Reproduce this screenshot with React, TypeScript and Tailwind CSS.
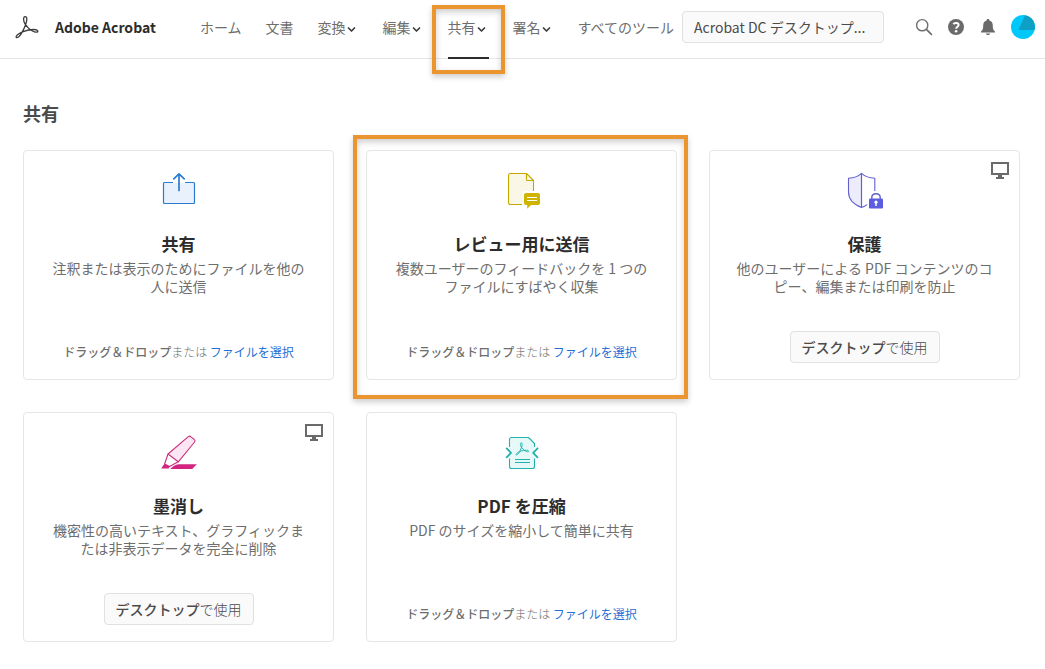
import { useState, type ReactNode } from 'react'
import clsx from 'clsx'

const ACROBAT_PATH =
  'M1.2 21.5C3 17.5 12 14.6 19 14.5C23.2 14.5 24 17.2 21.2 17.2C16.5 17 9 10 8.6 4.6C8.4 .8 11.9 .6 11.8 4.2C11.6 9.5 6.6 19.5 3.5 22C2 23 .8 22.6 1.2 21.5Z'

function AcrobatLogo() {
  return (
    <svg className="w-6 h-6" viewBox="0 0 24 24" fill="none" stroke="#3c3c3c" strokeWidth="1.3" aria-hidden="true">
      <path d={ACROBAT_PATH} />
    </svg>
  )
}

function ChevronDown() {
  return (
    <svg className="w-[9px] h-[9px] mt-1" viewBox="0 0 9 9" fill="none" stroke="#3c3c3c" strokeWidth="1.7" strokeLinecap="round" strokeLinejoin="round" aria-hidden="true">
      <path d="M1.5 3L4.5 6L7.5 3" />
    </svg>
  )
}

function SearchIcon() {
  return (
    <svg className="w-[18px] h-[18px]" viewBox="0 0 18 18" fill="none" stroke="#6e6e6e" strokeWidth="1.4" strokeLinecap="round">
      <circle cx="7.2" cy="7.2" r="5.6" />
      <path d="M11.4 11.4L16.4 16.4" strokeWidth="1.7" />
    </svg>
  )
}

function HelpIcon() {
  return (
    <svg className="w-[18px] h-[18px]" viewBox="0 0 18 18" fill="none">
      <circle cx="9" cy="9" r="8" fill="#6a6a6a" />
      <path d="M6.4 6.2C7.2 4.6 11.6 4.3 11.6 6.9C11.6 8.7 9.1 8.7 9.1 10.8" stroke="#fff" strokeWidth="2" />
      <circle cx="9.1" cy="13.2" r="1.3" fill="#fff" />
    </svg>
  )
}

function BellIcon() {
  return (
    <svg className="w-[18px] h-[18px]" viewBox="0 0 18 18" fill="#6a6a6a">
      <path d="M9 .9C9.9 .9 10.4 1.4 10.4 2.4C12.8 3 13.8 5 13.8 7.2C13.8 11 14.4 12 16 13.4V14.4H2V13.4C3.6 12 4.2 11 4.2 7.2C4.2 5 5.2 3 7.6 2.4C7.6 1.4 8.1 .9 9 .9Z" />
      <path d="M6.9 15.4H11.1C10.8 17.6 7.2 17.6 6.9 15.4Z" />
    </svg>
  )
}

function Avatar() {
  return (
    <svg className="w-6 h-6" viewBox="0 0 24 24">
      <circle cx="12" cy="12" r="12" fill="#00c8fa" />
      <path d="M14 .2A12 12 0 0 1 23.6 15H7.5Z" fill="#0d9fc4" />
    </svg>
  )
}

function DesktopIcon() {
  return (
    <svg className="w-[18px] h-[18px]" viewBox="0 0 18 18" fill="#6a6a6a" aria-hidden="true">
      <path fillRule="evenodd" d="M0 1H18V14H0ZM2 3V12H16V3Z" />
      <path d="M7 14H11V16H13V18H5V16H7Z" />
    </svg>
  )
}

function ShareIcon() {
  return (
    <svg className="w-10 h-10" viewBox="0 0 40 40" fill="none" stroke="#2b7bd0" strokeWidth="1.2" strokeLinecap="round" strokeLinejoin="round">
      <rect x="5" y="13" width="30" height="20" fill="#e9f1fd" stroke="none" />
      <path d="M13.5 12.5H5.5Q4.5 12.5 4.5 13.5V32.5Q4.5 33.5 5.5 33.5H34.5Q35.5 33.5 35.5 32.5V13.5Q35.5 12.5 34.5 12.5H26.5" />
      <path d="M20 20.5V4M14.8 8.8L20 3.8L25.2 8.8" strokeWidth="1.7" />
    </svg>
  )
}

function ReviewIcon() {
  return (
    <svg className="w-10 h-10" viewBox="0 0 40 40" fill="none" stroke="#c3a900" strokeWidth="1.1" strokeLinejoin="round">
      <path d="M8.5 3.5H24.5L31.5 10.5V21H20.5V34.5H8.5Q6.5 34.5 6.5 32.5V5.5Q6.5 3.5 8.5 3.5Z" fill="#faf7e6" stroke="none" />
      <path d="M20 34.5H8.5Q6.5 34.5 6.5 32.5V5.5Q6.5 3.5 8.5 3.5H24.5L31.5 10.5V21M24.5 3.5V9.5Q24.5 10.5 25.5 10.5H31.5" />
      <path d="M24 23H36Q38 23 38 25V33Q38 35 36 35H29L25.2 38.8V35H24Q22 35 22 33V25Q22 23 24 23Z" fill="#cfb300" stroke="none" />
      <path d="M25 27.5H35M25 30.5H35" stroke="#fff" />
    </svg>
  )
}

function ProtectIcon() {
  return (
    <svg className="w-10 h-10" viewBox="0 0 40 40" fill="none" stroke="#6360d0" strokeWidth="1.1" strokeLinejoin="round">
      <path d="M16.5 3.3C13 6.5 8 8 3.5 8.2V22C3.5 30 10 35 16.5 37.6Z" fill="#ececfb" />
      <path d="M16.5 3.3C20 6.5 25 8 29.8 8.2V21M16.5 37.6C18.6 36.8 20.5 35.8 22.2 34.6M16.5 3.3V37.6" />
      <path d="M26.8 29V27.5Q26.8 23.7 31 23.7Q35.2 23.7 35.2 27.5V29" strokeWidth="1.4" />
      <rect x="24" y="28.5" width="14" height="10" rx="1.2" fill="#5c5ce0" stroke="none" />
      <circle cx="31" cy="32.2" r="1.6" fill="#fff" stroke="none" />
      <path d="M31 32.5V36" stroke="#fff" strokeWidth="1.4" />
    </svg>
  )
}

function RedactIcon() {
  return (
    <svg className="w-10 h-10" viewBox="0 0 40 40" fill="none" stroke="#c9307c" strokeWidth="1.1" strokeLinejoin="round">
      <path d="M29.3 4.6Q30.8 3.6 32 4.8L35.4 7.6Q36.6 8.8 35.6 10L19.3 29.8L9 22Z" fill="#fde6f4" />
      <path d="M9 22L5.6 32L10.6 34.4L19.3 29.8" />
      <path d="M5.2 32L10.8 34.4L9.6 36.6H2.2Z" fill="#d3247f" stroke="none" />
      <path d="M11.2 37Q15.5 32.3 20.5 32.3H37.8L33.2 37Z" fill="#d3247f" stroke="none" />
    </svg>
  )
}

function CompressIcon() {
  return (
    <svg className="w-10 h-10" viewBox="0 0 40 40" fill="none" stroke="#22b2ac" strokeWidth="1.1" strokeLinejoin="round">
      <path d="M9.5 5.5H26.5L32.5 11.5V34.5Q32.5 36.5 30.5 36.5H9.5Q7.5 36.5 7.5 34.5V7.5Q7.5 5.5 9.5 5.5Z" fill="#e6f9f8" stroke="none" />
      <path d="M7.5 15V7.5Q7.5 5.5 9.5 5.5H26.5L32.5 11.5V15M7.5 26.5V34.5Q7.5 36.5 9.5 36.5H30.5Q32.5 36.5 32.5 34.5V26.5" />
      <path d="M4.2 15.8L9 20.8L4.2 25.8M36 15.8L31.2 20.8L36 25.8" strokeWidth="1.8" />
      <path d="M13 27.5H28M13 30.5H28" />
      <path d={ACROBAT_PATH} transform="translate(13.4 9.8) scale(.58)" strokeWidth="1.7" />
    </svg>
  )
}

const highlight =
  'absolute border-4 border-[#ea952f] shadow-[0_3px_6px_rgba(0,0,0,0.2),inset_0_3px_6px_rgba(0,0,0,0.2)] pointer-events-none'

const navItems = [
  { label: 'ホーム', menu: false },
  { label: '文書', menu: false },
  { label: '変換', menu: true },
  { label: '編集', menu: true },
  { label: '共有', menu: true },
  { label: '署名', menu: true },
  { label: 'すべてのツール', menu: false },
]

function Header() {
  const [active, setActive] = useState('共有')

  return (
    <header className="flex h-[59px] pl-[15px] pr-[10px] border-b border-[#e6e6e6]">
      <a href="#" className="flex items-center gap-4 h-[54px] text-[#2c2c2c] font-bold text-sm whitespace-nowrap">
        <AcrobatLogo />
        Adobe Acrobat
      </a>
      <nav className="flex flex-1 justify-end gap-6 mr-2 whitespace-nowrap">
        {navItems.map(({ label, menu }) => (
          <div key={label} className="relative">
            <button
              onClick={() => setActive(label)}
              className={clsx(
                'flex items-center gap-px h-[59px] pb-[3px] text-sm text-[#6e6e6e] border-b-2',
                menu && 'pr-[3px]',
                active === label ? 'border-[#2c2c2c]' : 'border-transparent'
              )}
            >
              {label}
              {menu && <ChevronDown />}
            </button>
            {label === '共有' && <div className={clsx(highlight, '-left-4 -right-4 top-[5px] -bottom-4')} />}
          </div>
        ))}
      </nav>
      <div className="flex items-center h-[54px]">
        <button className="w-[202px] h-8 px-[11px] text-left text-sm text-[#4b4b4b] bg-[#fafafa] border border-[#e1e1e1] rounded whitespace-nowrap">
          Acrobat DC デスクトップ...
        </button>
        <div className="flex items-center gap-[14px] ml-[31px]">
          <button aria-label="検索"><SearchIcon /></button>
          <button aria-label="ヘルプ"><HelpIcon /></button>
          <button aria-label="通知"><BellIcon /></button>
          <button aria-label="アカウント"><Avatar /></button>
        </div>
      </div>
    </header>
  )
}

type Tool = {
  title: string
  description: string
  icon: ReactNode
  desktop?: boolean
  highlighted?: boolean
}

const tools: Tool[] = [
  { title: '共有', description: '注釈または表示のためにファイルを他の人に送信', icon: <ShareIcon /> },
  { title: 'レビュー用に送信', description: '複数ユーザーのフィードバックを 1 つのファイルにすばやく収集', icon: <ReviewIcon />, highlighted: true },
  { title: '保護', description: '他のユーザーによる PDF コンテンツのコピー、編集または印刷を防止', icon: <ProtectIcon />, desktop: true },
  { title: '墨消し', description: '機密性の高いテキスト、グラフィックまたは非表示データを完全に削除', icon: <RedactIcon />, desktop: true },
  { title: 'PDF を圧縮', description: 'PDF のサイズを縮小して簡単に共有', icon: <CompressIcon /> },
]

function ToolCard({ title, description, icon, desktop, highlighted }: Tool) {
  return (
    <article className="relative flex flex-col items-center min-h-[230px] px-6 pt-[19px] pb-4 border border-[#e6e6e6] rounded text-center">
      {icon}
      {desktop && (
        <div className="absolute top-[10px] right-[10px]">
          <DesktopIcon />
        </div>
      )}
      <h2 className="mt-[22px] text-[17px] leading-6 font-bold text-[#2c2c2c]">{title}</h2>
      <p className="mt-[3px] text-sm leading-[18px] text-[#6e6e6e]">{description}</p>
      <div className="mt-auto">
        {desktop ? (
          <button className="h-8 px-[11px] text-sm font-light text-[#4b4b4b] bg-[#fafafa] border border-[#e1e1e1] rounded">
            <span className="font-medium">デスクトップ</span>で使用
          </button>
        ) : (
          <p className="pb-px text-xs leading-5 text-[#6e6e6e] whitespace-nowrap">
            <span className="font-medium">ドラッグ＆ドロップ</span>
            <span className="font-light">または</span>{' '}
            <a href="#" className="text-[#1f6fd6]">ファイルを選択</a>
          </p>
        )}
      </div>
      {highlighted && <div className={clsx(highlight, '-top-4 -bottom-5 -left-[14px] -right-3')} />}
    </article>
  )
}

export default function App() {
  return (
    <div className="min-h-screen bg-white font-['Noto_Sans_CJK_JP',sans-serif]">
      <Header />
      <main className="pl-[23px] pr-[25px] pt-10 pb-6">
        <h1 className="text-lg leading-7 font-bold text-[#4b4b4b]">共有</h1>
        <div className="grid grid-cols-3 gap-8 mt-[23px]">
          {tools.map((tool) => (
            <ToolCard key={tool.title} {...tool} />
          ))}
        </div>
      </main>
    </div>
  )
}
